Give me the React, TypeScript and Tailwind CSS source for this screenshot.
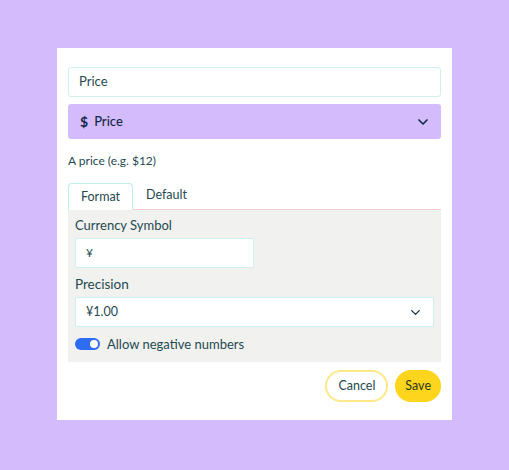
import { ChevronDown } from 'lucide-react';

export default function App() {
  return (
    <div
      className="h-[470px] w-[509px] bg-[#d4bcfc] pl-[57px] pt-[48px] text-[#1f4a50]"
      style={{ fontFamily: 'Lato, "Noto Sans", sans-serif' }}
    >
      <div className="flex h-[372px] w-[395px] flex-col bg-white px-[11px] pt-[19px]">
        {/* name input */}
        <div className="flex h-[30px] items-center rounded-[3px] border border-[#cdf1f3] px-[10px] text-[13px]">
          Price
        </div>

        {/* type select */}
        <div className="mt-[7px] flex h-[35px] items-center justify-between rounded-[3px] bg-[#d4bcfc] pl-[12px] pr-[10px] text-[13px] text-[#14294a]">
          <span className="flex items-center gap-[6px]">
            <span className="text-[14px] font-bold">$</span>
            <span className="font-medium">Price</span>
          </span>
          <ChevronDown size={16} strokeWidth={2.5} />
        </div>

        <p className="mt-[14px] text-[12px] leading-4">A price (e.g. $12)</p>

        {/* tabs */}
        <div className="mt-[14px] flex h-[27px] items-end border-b border-[#f5cfd3]">
          <div className="-mb-px flex h-[27px] items-center rounded-t-[4px] border border-b-0 border-[#bfeef1] bg-white px-[12px] text-[12.5px]">
            Format
          </div>
          <div className="flex h-[27px] items-center px-[13px] text-[12.5px]">Default</div>
        </div>

        {/* panel */}
        <div className="flex h-[152px] flex-col bg-[#f1f1ef] px-[7px] pt-[7px]">
          <label className="text-[13px] leading-4">Currency Symbol</label>
          <div className="mt-[5px] flex h-[30px] w-[179px] items-center rounded-[2px] border border-[#cdf1f3] bg-white px-[10px] text-[12px]">
            ¥
          </div>
          <label className="mt-[8px] text-[13.5px] leading-4">Precision</label>
          <div className="mt-[5px] flex h-[30px] items-center justify-between rounded-[2px] border border-[#cdf1f3] bg-white pl-[10px] pr-[10px] text-[12.5px]">
            <span>¥1.00</span>
            <ChevronDown size={15} strokeWidth={2.2} className="text-[#1a3340]" />
          </div>
          <div className="mt-[9px] flex items-center gap-[7px]">
            <span className="relative inline-block h-[12px] w-[25px] rounded-full bg-[#2f6cf4]">
              <span className="absolute right-[2px] top-[2px] h-[8px] w-[8px] rounded-full bg-white" />
            </span>
            <span className="text-[13px] leading-4">Allow negative numbers</span>
          </div>
        </div>

        {/* actions */}
        <div className="mt-[8px] flex justify-end gap-[7px]">
          <button className="flex h-[32px] items-center rounded-full border-2 border-[#fde98a] bg-white px-[11px] text-[12.5px] text-[#1f4a50]">
            Cancel
          </button>
          <button className="flex h-[32px] items-center rounded-full bg-[#fcd51c] px-[10px] text-[12.5px] text-[#2a3a20]">
            Save
          </button>
        </div>
      </div>
    </div>
  );
}
